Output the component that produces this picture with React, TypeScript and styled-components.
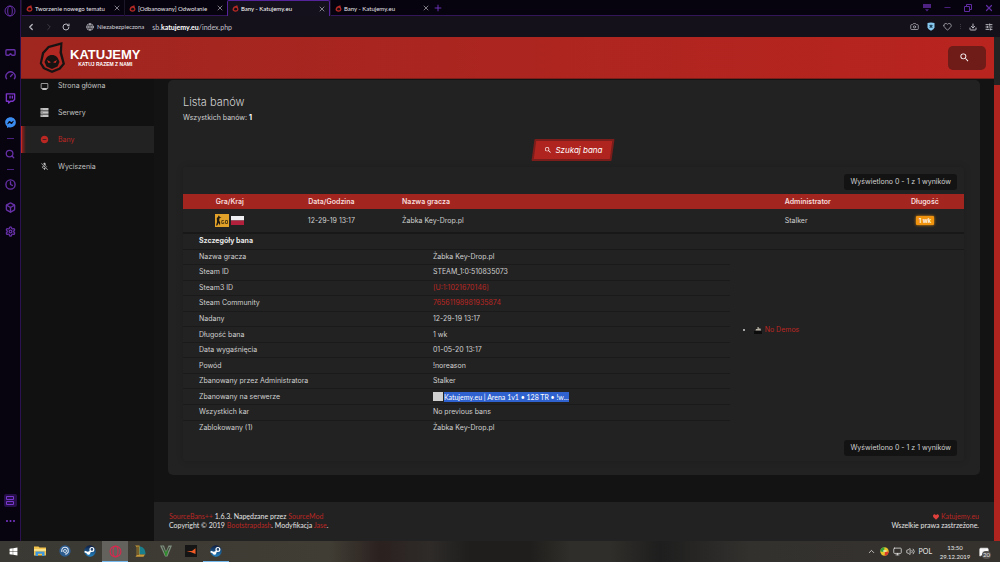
import React from "react";
import styled, { createGlobalStyle, css } from "styled-components";
import {
  RectangleGoggles, Gauge, Twitch, Search, Clock, Box, Camera, Heart, Download,
  SlidersHorizontal, Globe, ChevronLeft, ChevronRight, ChevronUp, RotateCw, X, Plus, Minus,
  Monitor, Volume2, MessageSquareText, Settings,
} from "lucide-react";
import { MdOutlineMonitor, MdRemoveCircle, MdMicOff, MdSearch } from "react-icons/md";
import { FaHeart, FaWindows, FaFacebookMessenger } from "react-icons/fa";

const ui = `Lato, "Noto Sans", sans-serif`;
const red = "#bb2723";

const Global = createGlobalStyle`
  * { box-sizing: border-box; }
  body { margin: 0; background: #131313; color: #d0d0d0; font: 7px/10px Inter, "Liberation Sans", sans-serif; }
  button { border: 0; padding: 0; background: none; color: inherit; font: inherit; cursor: pointer; }
  a { color: ${red}; text-decoration: none; }
  svg { display: block; flex: none; }
`;

const Desktop = styled.div`
  display: grid;
  grid-template-columns: 21px minmax(0, 1fr);
  grid-template-rows: minmax(0, 1fr) 21px;
  height: 100vh;
`;

/* Browser chrome */
const Rail = styled.nav`
  display: flex;
  flex-direction: column;
  align-items: center;
  padding: 4px 0 14px;
  background: #07030f;
  color: #6530a6;
  border-right: 1px solid #2c1350;
`;
const RailButton = styled.button<{ $gap: number; $active?: boolean }>`
  display: grid;
  place-items: center;
  width: 13px;
  height: 13px;
  margin-bottom: ${(p) => p.$gap}px;
  border-radius: 2px;
  color: ${(p) => (p.$active ? "#7a37cc" : "inherit")};
  background: ${(p) => (p.$active ? "#27104a" : "none")};
`;
const RailLine = styled.span`
  width: 7px;
  height: 1px;
  margin-bottom: 8px;
  background: #4a2380;
`;
const Spacer = styled.span`
  flex: 1;
`;
const Browser = styled.div`
  display: flex;
  flex-direction: column;
  min-width: 0;
  min-height: 0;
`;
const TabBar = styled.div`
  display: flex;
  height: 16px;
  background: #06020e;
  border-bottom: 1px solid #33165a;
  font: 6px/15px ${ui};
`;
const Tab = styled.div<{ $active?: boolean }>`
  display: flex;
  align-items: center;
  gap: 2px;
  width: 103px;
  height: 16px;
  padding: 0 3px 0 4px;
  color: #e6e4ea;
  white-space: nowrap;
  border-left: 1px solid ${(p) => (p.$active ? "#56249a" : "#1c1626")};
  ${(p) =>
    p.$active &&
    css`
      background: #14111c;
      border-top: 1px solid #56249a;
      border-right: 1px solid #56249a;
      border-radius: 2px 2px 0 0;
      color: #fff;
    `}
`;
const TabTitle = styled.span`
  flex: 1;
`;
const IconButton = styled.button<{ $color?: string }>`
  display: grid;
  place-items: center;
  color: ${(p) => p.$color ?? "#b9b8bf"};
`;
const WindowButtons = styled.div`
  display: flex;
  align-items: center;
  gap: 12px;
  margin-left: auto;
  padding-right: 6px;
  color: #5f2ba0;
`;
const AddressBar = styled.div`
  display: flex;
  align-items: center;
  gap: 8px;
  height: 21px;
  padding: 0 7px 0 5px;
  background: #14111b;
  color: #c4c3ca;
  font: 7px/12px ${ui};
`;
const Secure = styled.span`
  display: flex;
  align-items: center;
  gap: 3px;
  padding-left: 8px;
  font-size: 6px;
  color: #d4d3d9;
`;
const Address = styled.span`
  b { color: #fff; font-weight: 700; }
`;
const Tools = styled.div`
  display: flex;
  align-items: center;
  gap: 8px;
  margin-left: auto;
`;
const ToolsDivider = styled.span`
  height: 5px;
  border-left: 1px dotted #3a3743;
`;

/* Page */
const Viewport = styled.div`
  display: grid;
  grid-template-columns: minmax(0, 1fr) 6px;
  flex: 1;
  min-height: 0;
`;
const ScrollTrack = styled.div`
  padding-top: 48px;
  background: #232323;
`;
const ScrollThumb = styled.div`
  height: 100%;
  background: #b0241f;
`;
const Page = styled.div`
  display: flex;
  flex-direction: column;
  min-height: 0;
`;
const Header = styled.header`
  display: flex;
  align-items: center;
  justify-content: space-between;
  flex: none;
  height: 42px;
  padding: 0 8px 0 18px;
  background: linear-gradient(90deg, #a02620, #b9241f);
  border-bottom: 1px solid #7b1d19;
`;
const Brand = styled.a`
  display: flex;
  align-items: center;
  gap: 4px;
  color: #fff;
`;
const BrandText = styled.span`
  display: flex;
  flex-direction: column;
  align-items: center;
  font: 700 13px/12px "Liberation Sans", sans-serif;
  small { font-size: 5px; line-height: 6px; }
`;
const SearchButton = styled.button`
  display: grid;
  place-items: center;
  width: 38px;
  height: 24px;
  padding-right: 6px;
  border-radius: 5px;
  background: #6f1b18;
  color: #fff;
`;
const Body = styled.div`
  display: grid;
  grid-template-columns: 133px minmax(0, 1fr);
  flex: 1;
  min-height: 0;
`;
const Menu = styled.nav`
  background: #111;
`;
const MenuLink = styled.a<{ $active?: boolean; $first?: boolean }>`
  display: flex;
  align-items: center;
  gap: 9px;
  height: ${(p) => (p.$first ? 20 : 27)}px;
  padding: 0 0 ${(p) => (p.$first ? 6 : 0)}px 18px;
  border-left: 1px solid transparent;
  color: #c2c2c2;
  ${(p) =>
    p.$active &&
    css`
      color: ${red};
      background: linear-gradient(90deg, #8e1f1b, #222 4px);
      border-left-color: #c32a24;
    `}
`;
const Content = styled.main`
  display: flex;
  flex-direction: column;
  justify-content: space-between;
  background: #131313;
`;
const Card = styled.section`
  margin: 1px 14px 0;
  padding: 15px 16px 14px 15px;
  background: #222;
  border-radius: 5px;
`;
const Title = styled.h1`
  margin: 0 0 4px;
  font-size: 11px;
  line-height: 14px;
  font-weight: 300;
`;
const Count = styled.p`
  margin: 0 0 16px;
  b { color: #fff; }
`;
const FindButton = styled.button`
  position: relative;
  z-index: 0;
  display: flex;
  align-items: center;
  gap: 3px;
  height: 22px;
  margin: 0 auto 6px;
  padding: 0 12px;
  color: #fff;
  font-size: 8px;
  font-style: italic;
  &::before {
    content: "";
    position: absolute;
    inset: 0 1px;
    z-index: -1;
    transform: skewX(-8deg);
    border: 2px solid #7b1d1a;
    border-radius: 1px;
    background: #b0241f;
  }
`;
const Panel = styled.div`
  padding: 7px 0 5px;
  border-radius: 3px;
  box-shadow: 0 0 7px rgba(0, 0, 0, 0.16);
`;
const Pill = styled.p<{ $bottom?: boolean }>`
  width: fit-content;
  margin: ${(p) => (p.$bottom ? "5px" : "0")} 7px ${(p) => (p.$bottom ? "0" : "4px")} auto;
  padding: 0 6px;
  border-radius: 3px;
  background: #131313;
  line-height: 16px;
`;
const Table = styled.table`
  width: 100%;
  table-layout: fixed;
  border-collapse: collapse;
`;
const Th = styled.th<{ $w: number; $center?: boolean }>`
  width: ${(p) => p.$w}%;
  height: 15px;
  padding: 0 ${(p) => (p.$center ? 0 : 16)}px;
  text-align: ${(p) => (p.$center ? "center" : "left")};
  background: #a32520;
  color: #f6dddc;
  font-weight: 600;
`;
const Td = styled.td<{ $center?: boolean }>`
  height: 24px;
  padding: 0 ${(p) => (p.$center ? 0 : 16)}px;
  text-align: ${(p) => (p.$center ? "center" : "left")};
  border-bottom: 2px solid #181818;
`;
const Flags = styled.span`
  display: flex;
  align-items: center;
  justify-content: center;
  gap: 2px;
`;
const Length = styled.span`
  display: inline-block;
  padding: 0 3px;
  border-radius: 1px;
  background: #f09410;
  box-shadow: 0 0 3px #f09410;
  color: #fff;
  font-size: 6px;
  line-height: 9px;
  font-weight: 600;
`;
const Details = styled(Table)`
  height: 201px;
`;
const DetailsTitle = styled.th`
  height: 15px;
  padding: 0 16px;
  text-align: left;
  color: #e6e6e6;
  border-bottom: 1px solid #191919;
`;
const Label = styled.th`
  padding: 0 16px;
  text-align: left;
  font-weight: 400;
  border-bottom: 1px solid #1a1a1a;
  tr:last-child > & { border: 0; }
`;
const Value = styled.td`
  padding: 0;
  border-bottom: 1px solid #1a1a1a;
  tr:last-child > & { border: 0; }
`;
const DemoCell = styled.td`
  padding: 0 0 24px 16px;
`;
const DemoList = styled.ul`
  margin: 0;
  padding-left: 8px;
  a { display: inline-flex; align-items: center; gap: 3px; vertical-align: top; }
`;
const Server = styled.span`
  display: flex;
  gap: 1px;
  font-family: ${ui};
  &::before { content: ""; width: 10px; height: 9px; background: #d0d0d0; }
`;
const Marked = styled.mark`
  background: #2f62cf;
  color: #fff;
`;
const Footer = styled.footer`
  display: flex;
  justify-content: space-between;
  height: 39px;
  padding: 10px 15px;
  background: #222;
  font-family: ${ui};
  line-height: 9px;
  color: #e4e4e4;
`;
const Credits = styled.div<{ $right?: boolean }>`
  text-align: ${(p) => (p.$right ? "right" : "left")};
  svg { display: inline-block; vertical-align: -1px; color: #e0403c; }
`;

/* Taskbar */
const Taskbar = styled.footer`
  grid-column: 1 / -1;
  display: flex;
  align-items: center;
  background: linear-gradient(90deg, #3a3933 0%, #403d34 33%, #2b211f 38%, #2e2b29 43%, #1f1e1c 47%, #1f1e1c 53%, #302e2a 57%, #302e2a 61%, #1e1e1e 66%, #33312e 75%, #35322e 100%);
  color: #e8e8e8;
  font: 7px/9px ${ui};
`;
const TaskButton = styled.button<{ $wide?: boolean; $open?: boolean; $active?: boolean }>`
  display: grid;
  place-items: center;
  width: ${(p) => (p.$wide ? 27 : p.$open ? 26 : 25)}px;
  height: 21px;
  color: #fff;
  background: ${(p) => (p.$active ? "#63625c" : "none")};
  border-bottom: 1px solid ${(p) => (p.$open ? "#76b9ed" : "transparent")};
`;
const Tray = styled.div`
  display: flex;
  align-items: center;
  gap: 4px;
  margin-left: auto;
  padding-right: 11px;
`;
const DateTime = styled.time`
  width: 32px;
  margin: 0 4px 0 3px;
  text-align: center;
  font-size: 6px;
`;
const Notice = styled.span`
  position: relative;
  b {
    position: absolute;
    left: 3px;
    top: 4px;
    padding: 0 1px;
    border-radius: 4px;
    background: #55524e;
    font-size: 6px;
    line-height: 8px;
    font-weight: 400;
  }
`;

const OperaIcon = ({ size = 12, color = "currentColor" }) => (
  <svg width={size} height={size} viewBox="0 0 12 12" fill="none" stroke={color}>
    <circle cx="6" cy="6" r="5" />
    <ellipse cx="6" cy="6" rx="2.3" ry="4.8" />
  </svg>
);
const Hood = ({ size = 8 }) => (
  <svg width={size} height={size} viewBox="0 0 8 8">
    <path d="M.6 5C.8 2.5 2.500 1.400 6.200.3 6 1.800 7.500 3 7.400 5.100 7 7 5.500 7.600 4 7.700 2 7.500.8 6.500.6 5Z" fill="#b52a25" />
    <path d="M2.200 5.200C2.500 3.700 3.200 3.200 4.200 3.200S6 4 6 5.200C5.700 6.500 2.600 6.500 2.200 5.200Z" fill="#160c12" />
  </svg>
);
const Logo = () => (
  <svg width="27" height="31" viewBox="0 0 27 31">
    <path d="M23.500 0 23 10.500 26 22 21.500 27.500 13 31 4 27 .7 21.500 3 10.500 9 4Z" fill="#181313" />
    <path d="M21.300 3 20.500 10.700 23.500 21.500 19.800 25.800 13 28.500 6 25.400 3 21 5.200 11.600 10.200 6Z" fill="#b12721" />
    <path d="M13 13C17 13 19 15.500 20.500 20L18.500 24.500 13 27 7.500 24.500 5.500 20C7 15.500 9 13 13 13Z" fill="#181313" />
    <path d="M8 18 12 20.200 9.500 21Z M18 18 14 20.200 16.500 21Z" fill="#d22d25" />
  </svg>
);
const CsgoIcon = () => (
  <svg width="14" height="13" viewBox="0 0 14 13">
    <path d="M0 0h14v13H0z" fill="#e2a128" />
    <path d="M1 11.500 2 8 1.800 4 3 3 3.500 1.500 4.600 2 4.500 3 6.500 3.600 4.500 4.300 4.200 6.500 5.200 8.500 5 11.500 3.600 9 2.300 11.500Z" fill="#1f1a12" />
    <path d="M8.800 6.500h-2v3h2V8M12.500 6.500h-2v3h2Z" fill="none" stroke="#5b4212" />
  </svg>
);
const Flag = () => (
  <svg width="13" height="9" viewBox="0 0 13 9">
    <path d="M0 0h13v4.500H0z" fill="#efeff1" />
    <path d="M0 4.500h13V9H0z" fill="#b3203c" />
  </svg>
);
const DemoIcon = () => (
  <svg width="8" height="8" viewBox="0 0 8 8">
    <path d="M0 5h8v3H0z" fill="#0c0c0c" />
    <path d="M3.500 1h1.200v1.600H6.500L7 4.500H1.500L2 3h1.500Z" fill="#b8b3a5" />
  </svg>
);
const Shield = () => (
  <svg width="8" height="9" viewBox="0 0 8 9">
    <path d="M.5 1 4 .5 7.500 1V5.500Q7 7.500 4 8.700 1 7.500.5 5.500Z" fill="#86c8ee" />
    <path d="m2.700 3 2.600 2.600M5.300 3 2.700 5.600" stroke="#173a55" strokeWidth="1.200" />
  </svg>
);
const FolderIcon = () => (
  <svg width="12" height="10" viewBox="0 0 12 10">
    <path d="M0 .5h4.500l1 1H12V9.500H0Z" fill="#f2c44d" />
    <path d="M0 3h12v2H0Z" fill="#fbe08a" />
    <path d="M1.500 10V5.500h9V10H8V7.800H4V10Z" fill="#3f97dd" />
  </svg>
);
const CircleIcon = () => (
  <svg width="12" height="12" viewBox="0 0 12 12">
    <circle cx="6" cy="6" r="5.700" fill="#2d5c8f" />
    <path d="M2.800 7V5.500a3.200 3.200 0 0 1 6.400 0V7L7.500 9H6" fill="none" stroke="#dfe8f2" strokeWidth="1.100" />
    <circle cx="6" cy="6" r="1.500" fill="none" stroke="#dfe8f2" strokeWidth=".9" />
  </svg>
);
const SteamIcon = ({ id }: { id: string }) => (
  <svg width="12" height="12" viewBox="0 0 12 12">
    <defs>
      <linearGradient id={id} x2="0" y2="1"><stop stopColor="#101c40" /><stop offset="1" stopColor="#2384c4" /></linearGradient>
    </defs>
    <circle cx="6" cy="6" r="5.800" fill={`url(#${id})`} />
    <path d="M.6 6.500 4.500 8.200 8 4.800" fill="none" stroke="#fff" strokeWidth="1.800" />
    <circle cx="7.900" cy="4.400" r="1.900" fill="#24486f" stroke="#fff" strokeWidth="1.200" />
    <circle cx="4.500" cy="8.200" r="1.600" fill="#fff" />
  </svg>
);
const LeagueIcon = () => (
  <svg width="11" height="12" viewBox="0 0 11 12">
    <path d="M4 1.500C8 1.500 10.500 4 10.500 9.500H4Z" fill="#197f8d" />
    <path d="M0 .5h4.500V9.500H10L8.500 11.700H.5L1.700 10V2Z" fill="#c8993a" />
    <path d="M3 1.500v8.500" stroke="#2a2417" />
  </svg>
);
const GtaIcon = () => (
  <svg width="12" height="12" viewBox="0 0 12 12">
    <path d="M0 .5h4l2 6L8.500.5H12L7.500 11.500H5Z" fill="#7d8c7c" />
    <path d="M2.500 1.500 6 10 9.500 2" fill="none" stroke="#263025" strokeWidth=".8" />
    <path d="M4 4.500 6 7 8 4 7 10.500 5.500 11Z" fill="#2f8f2c" />
  </svg>
);
const FaceitIcon = () => (
  <svg width="12" height="12" viewBox="0 0 12 12">
    <path d="M0 0h12v12H0z" fill="#151515" />
    <path d="M1.500 6H7L10.500 3.200V9Q6.500 7 1.500 6Z" fill="#f05a24" />
  </svg>
);
const TrayIcon = () => (
  <svg width="9" height="9" viewBox="0 0 9 9">
    <circle cx="4.500" cy="4.500" r="4.200" fill="#e8c62b" />
    <path d="M4.500.3A4.200 4.200 0 0 0 .3 4.500L4 5Z" fill="#35a23d" />
    <path d="M8.700 4.500A4.200 4.200 0 0 1 4.500 8.700L5 5Z" fill="#dd3c2c" />
    <path d="M3 4h3.500" stroke="#fff" />
  </svg>
);
const ServerIcon = () => (
  <svg width="9" height="9" viewBox="0 0 9 9" fill="currentColor">
    <path d="M.5 0h8v2.500h-8zM.5 3.300h8v2.500h-8zM.5 6.500h8V9h-8z" />
    <path d="M1.500 1.200h1M1.500 4.500h1M1.500 7.700h1" stroke="#333" strokeWidth=".6" />
  </svg>
);

const tabs = ["Tworzenie nowego tematu", "[Odbanowany] Odwołanie", "Bany - Katujemy.eu", "Bany - Katujemy.eu"];
const rows: [string, React.ReactNode][] = [
  ["Nazwa gracza", "Żabka Key-Drop.pl"],
  ["Steam ID", "STEAM_1:0:510835073"],
  ["Steam3 ID", <a href="#steam3">[U:1:1021670146]</a>],
  ["Steam Community", <a href="#community">76561198981935874</a>],
  ["Nadany", "12-29-19 13:17"],
  ["Długość bana", "1 wk"],
  ["Data wygaśnięcia", "01-05-20 13:17"],
  ["Powód", "!noreason"],
  ["Zbanowany przez Administratora", "Stalker"],
  ["Zbanowany na serwerze", <Server><Marked>Katujemy.eu | Arena 1v1 • 128 TR • !w...</Marked></Server>],
  ["Wszystkich kar", "No previous bans"],
  ["Zablokowany (1)", "Żabka Key-Drop.pl"],
];
const summary = "Wyświetlono 0 - 1 z 1 wyników";

export default function App() {
  return (
    <Desktop>
      <Global />
      <Rail>
        <RailButton $gap={29} aria-label="Opera"><OperaIcon /></RailButton>
        <RailButton $gap={10} aria-label="GX Corner"><RectangleGoggles size={11} strokeWidth={3} /></RailButton>
        <RailButton $gap={10} aria-label="GX Control"><Gauge size={11} strokeWidth={3} /></RailButton>
        <RailButton $gap={11} aria-label="Twitch"><Twitch size={11} strokeWidth={3} color="#7a35c8" /></RailButton>
        <RailButton $gap={9} aria-label="Messenger"><FaFacebookMessenger size={11} color="#3b8cf0" /></RailButton>
        <RailLine />
        <RailButton $gap={9} aria-label="Szukaj"><Search size={10} strokeWidth={3} /></RailButton>
        <RailLine />
        <RailButton $gap={10} aria-label="Historia"><Clock size={11} strokeWidth={3} /></RailButton>
        <RailButton $gap={11} aria-label="Rozszerzenia"><Box size={11} strokeWidth={3} /></RailButton>
        <RailButton $gap={0} aria-label="Ustawienia"><Settings size={11} strokeWidth={3} /></RailButton>
        <Spacer />
        <RailButton $gap={7} $active aria-label="Panel">
          <svg width="8" height="9" viewBox="0 0 8 9" fill="none" stroke="currentColor"><path d="M.5.5h7v3h-7zM.5 5.500h7v3h-7z" /></svg>
        </RailButton>
        <RailButton $gap={0} aria-label="Więcej">
          <svg width="9" height="2" viewBox="0 0 9 2" fill="#7a37cc"><circle cx="1" cy="1" r="1" /><circle cx="4.500" cy="1" r="1" /><circle cx="8" cy="1" r="1" /></svg>
        </RailButton>
      </Rail>

      <Browser>
        <TabBar>
          {tabs.map((t, i) => (
            <Tab key={i} $active={i === 2}>
              <Hood size={7} />
              <TabTitle>{t}</TabTitle>
              <IconButton aria-label="Zamknij kartę"><X size={8} /></IconButton>
            </Tab>
          ))}
          <IconButton $color="#7a37cc" aria-label="Nowa karta"><Plus size={10} /></IconButton>
          <WindowButtons>
            <IconButton $color="inherit" aria-label="Karty">
              <svg width="8" height="8" viewBox="0 0 8 8" fill="currentColor"><path d="M0 0h8v4H0zM2 5.200h4L4 7.500z" opacity=".8" /></svg>
            </IconButton>
            <IconButton $color="inherit" aria-label="Minimalizuj"><Minus size={9} /></IconButton>
            <IconButton $color="inherit" aria-label="Przywróć">
              <svg width="8" height="8" viewBox="0 0 8 8" fill="none" stroke="currentColor"><path d="M.5 2.500h5v5h-5zM2.500 2.500v-2h5v5h-2" /></svg>
            </IconButton>
            <IconButton $color="inherit" aria-label="Zamknij"><X size={10} strokeWidth={3} /></IconButton>
          </WindowButtons>
        </TabBar>
        <AddressBar>
          <IconButton aria-label="Wstecz"><ChevronLeft size={10} strokeWidth={3} /></IconButton>
          <IconButton $color="#46434d" aria-label="Dalej"><ChevronRight size={10} /></IconButton>
          <IconButton aria-label="Odśwież"><RotateCw size={8} strokeWidth={3} /></IconButton>
          <Secure><Globe size={8} />Niezabezpieczona</Secure>
          <Address>sb.<b>katujemy.eu</b>/index.php</Address>
          <Tools>
            <IconButton aria-label="Zrzut ekranu"><Camera size={9} /></IconButton>
            <IconButton aria-label="Blokada reklam"><Shield /></IconButton>
            <IconButton aria-label="Ulubione"><Heart size={9} /></IconButton>
            <ToolsDivider />
            <IconButton aria-label="Pobrane"><Download size={8} strokeWidth={3} /></IconButton>
            <IconButton aria-label="Opcje"><SlidersHorizontal size={8} strokeWidth={3} /></IconButton>
          </Tools>
        </AddressBar>

        <Viewport>
          <Page>
            <Header>
              <Brand href="#home">
                <Logo />
                <BrandText>KATUJEMY<small>KATUJ RAZEM Z NAMI</small></BrandText>
              </Brand>
              <SearchButton aria-label="Szukaj"><MdSearch size={11} stroke="#fff" /></SearchButton>
            </Header>
            <Body>
              <Menu>
                <MenuLink href="#home" $first><MdOutlineMonitor size={9} />Strona główna</MenuLink>
                <MenuLink href="#servers"><ServerIcon />Serwery</MenuLink>
                <MenuLink href="#bans" $active><MdRemoveCircle size={9} />Bany</MenuLink>
                <MenuLink href="#mutes"><MdMicOff size={9} />Wyciszenia</MenuLink>
              </Menu>
              <Content>
                <Card>
                  <Title>Lista banów</Title>
                  <Count>Wszystkich banów: <b>1</b></Count>
                  <FindButton><MdSearch size={8} />Szukaj bana</FindButton>
                  <Panel>
                    <Pill>{summary}</Pill>
                    <Table>
                      <thead>
                        <tr>
                          <Th $w={12} $center>Gra/Kraj</Th>
                          <Th $w={14} $center>Data/Godzina</Th>
                          <Th $w={49}>Nazwa gracza</Th>
                          <Th $w={15}>Administrator</Th>
                          <Th $w={10} $center>Długość</Th>
                        </tr>
                      </thead>
                      <tbody>
                        <tr>
                          <Td $center><Flags><CsgoIcon /><Flag /></Flags></Td>
                          <Td $center>12-29-19 13:17</Td>
                          <Td>Żabka Key-Drop.pl</Td>
                          <Td>Stalker</Td>
                          <Td $center><Length>1 wk</Length></Td>
                        </tr>
                      </tbody>
                    </Table>
                    <Details>
                      <colgroup>
                        <col width="32%" /><col width="38%" /><col />
                      </colgroup>
                      <thead>
                        <tr><DetailsTitle colSpan={3}>Szczegóły bana</DetailsTitle></tr>
                      </thead>
                      <tbody>
                        {rows.map(([label, value], i) => (
                          <tr key={label}>
                            <Label scope="row">{label}</Label>
                            <Value>{value}</Value>
                            {i === 0 && (
                              <DemoCell rowSpan={rows.length}>
                                <DemoList><li><a href="#demos"><DemoIcon />No Demos</a></li></DemoList>
                              </DemoCell>
                            )}
                          </tr>
                        ))}
                      </tbody>
                    </Details>
                    <Pill $bottom>{summary}</Pill>
                  </Panel>
                </Card>
                <Footer>
                  <Credits>
                    <a href="#sb">SourceBans++</a> 1.6.3. Napędzane przez <a href="#sm">SourceMod</a><br />
                    Copyright © 2019 <a href="#bd">Bootstrapdash</a>. Modyfikacja <a href="#jase">Jase</a>.
                  </Credits>
                  <Credits $right>
                    <FaHeart size={6} /> <a href="#home">Katujemy.eu</a><br />
                    Wszelkie prawa zastrzeżone.
                  </Credits>
                </Footer>
              </Content>
            </Body>
          </Page>
          <ScrollTrack><ScrollThumb /></ScrollTrack>
        </Viewport>
      </Browser>

      <Taskbar>
        <TaskButton $wide aria-label="Start"><FaWindows size={9} /></TaskButton>
        <TaskButton aria-label="Eksplorator"><FolderIcon /></TaskButton>
        <TaskButton aria-label="TeamSpeak"><CircleIcon /></TaskButton>
        <TaskButton aria-label="Steam"><SteamIcon id="steam-pinned" /></TaskButton>
        <TaskButton $open $active aria-label="Opera GX"><OperaIcon size={13} color="#d8284f" /></TaskButton>
        <TaskButton aria-label="League"><LeagueIcon /></TaskButton>
        <TaskButton aria-label="GTA V"><GtaIcon /></TaskButton>
        <TaskButton aria-label="Faceit"><FaceitIcon /></TaskButton>
        <TaskButton $open aria-label="Steam, okno"><SteamIcon id="steam-open" /></TaskButton>
        <Tray>
          <ChevronUp size={9} />
          <TrayIcon />
          <Monitor size={9} />
          <Volume2 size={9} />
          <span>POL</span>
          <DateTime>13:50<br />29.12.2019</DateTime>
          <Notice><MessageSquareText size={10} fill="#fff" /><b>20</b></Notice>
        </Tray>
      </Taskbar>
    </Desktop>
  );
}
